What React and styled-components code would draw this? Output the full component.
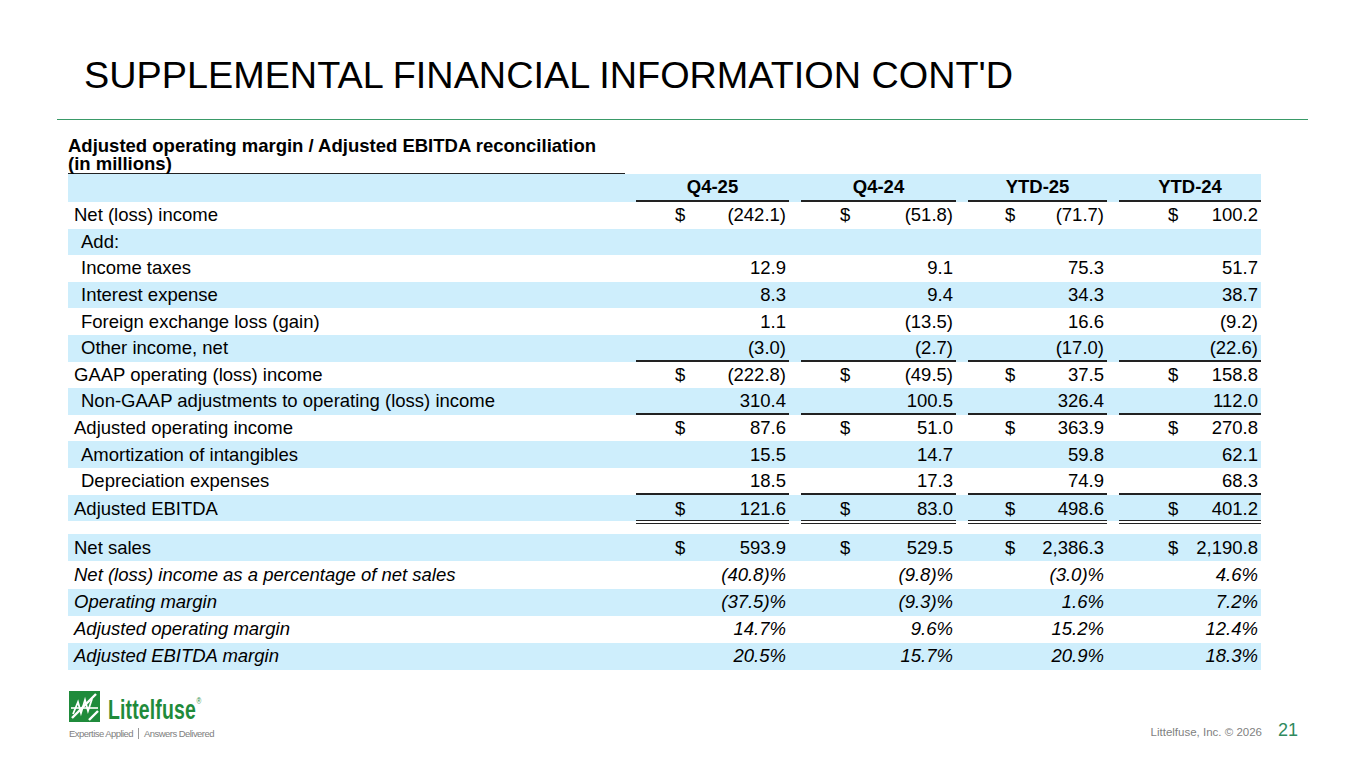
import React from "react";
import styled, { createGlobalStyle } from "styled-components";

const GlobalStyle = createGlobalStyle`
  html, body {
    margin: 0;
    padding: 0;
    background: #fff;
  }
  body {
    font-family: "Liberation Sans", Arial, sans-serif;
    color: #000;
  }
`;

const BLUE = "#ceeefc";
const GREEN = "#2f8a5e";
const COLS = "556px 153px 155px 139px 142px";
// where the "$" sits inside each value column
const DOLLAR_LEFT = [39, 39, 37, 49];

const Page = styled.div`
  width: 1365px;
  height: 768px;
  display: flex;
  flex-direction: column;
  overflow: hidden;
`;

const Title = styled.h1`
  margin: 56px 0 0 84px;
  font-size: 37.8px;
  line-height: 38px;
  font-weight: normal;
  color: #000;
`;

const Rule = styled.div`
  margin: 25px 0 0 57px;
  width: 1251px;
  height: 1px;
  background: #3a9a68;
`;

const Table = styled.div`
  margin: 17px 0 0 68px;
  width: 1193px;
  font-size: 18.5px;
`;

const Caption = styled.div`
  width: 557px;
  font-weight: bold;
  line-height: 18px;
  border-bottom: 1px solid #222;
`;

const Row = styled.div`
  display: grid;
  grid-template-columns: ${COLS};
  column-gap: 12px;
  height: ${(p) => p.$h || 26.6}px;
  background: ${(p) => (p.$blue ? BLUE : "transparent")};
  font-style: ${(p) => (p.$italic ? "italic" : "normal")};
`;

const Label = styled.div`
  display: flex;
  align-items: center;
  padding-left: ${(p) => (p.$indent ? 13 : 6)}px;
  white-space: nowrap;
`;

const HeadCell = styled.div`
  display: flex;
  align-items: center;
  justify-content: center;
  font-weight: bold;
  border-bottom: 2px solid #222;
  box-sizing: border-box;
`;

const Cell = styled.div`
  display: flex;
  align-items: center;
  box-sizing: border-box;
  padding: 0 3px 0 ${(p) => p.$dl}px;
  border-bottom: ${(p) =>
    p.$rule === "double"
      ? "4px double #222"
      : p.$rule === "single"
      ? "2px solid #222"
      : "none"};
  padding-top: ${(p) => (p.$rule === "double" ? 3 : p.$rule ? 1 : 0)}px;
`;

const Value = styled.span`
  margin-left: auto;
  white-space: nowrap;
`;

const Spacer = styled.div`
  height: 13px;
`;

const Footer = styled.div`
  margin-top: auto;
  display: flex;
  justify-content: space-between;
  align-items: flex-end;
  padding: 0 67px 29px 69px;
`;

const Logo = styled.div`
  display: flex;
  flex-direction: column;
`;

const LogoTop = styled.div`
  display: flex;
  align-items: center;
  height: 31px;
`;

const Wordmark = styled.span`
  display: inline-block;
  margin-left: 8px;
  font-size: 27px;
  font-weight: bold;
  color: #1f8b3b;
  transform: scaleX(0.72);
  transform-origin: left center;
  letter-spacing: 0.2px;
  line-height: 31px;
  position: relative;
  top: -1px;
`;

const Reg = styled.sup`
  font-size: 9px;
  font-weight: normal;
  vertical-align: 15px;
  margin-left: 1px;
`;

const Tagline = styled.div`
  margin-top: 6px;
  font-size: 9.5px;
  letter-spacing: -0.55px;
  color: #808080;
  white-space: nowrap;
`;

const Bar = styled.span`
  display: inline-block;
  width: 1px;
  height: 11px;
  background: #999;
  margin: 0 5px;
  vertical-align: -2px;
`;

const Credit = styled.div`
  display: flex;
  align-items: baseline;
  gap: 16px;
  margin-bottom: -2px;
`;

const Copy = styled.span`
  font-size: 11.5px;
  color: #7f7f7f;
`;

const PageNo = styled.span`
  font-size: 18px;
  color: ${GREEN};
`;

const rowsTop = [
  { label: "Net (loss) income", dollar: true, vals: ["(242.1)", "(51.8)", "(71.7)", "100.2"] },
  { label: "Add:", indent: true, blue: true },
  { label: "Income taxes", indent: true, vals: ["12.9", "9.1", "75.3", "51.7"] },
  { label: "Interest expense", indent: true, blue: true, vals: ["8.3", "9.4", "34.3", "38.7"] },
  { label: "Foreign exchange loss (gain)", indent: true, vals: ["1.1", "(13.5)", "16.6", "(9.2)"] },
  { label: "Other income, net", indent: true, blue: true, rule: "single", vals: ["(3.0)", "(2.7)", "(17.0)", "(22.6)"] },
  { label: "GAAP operating (loss) income", dollar: true, vals: ["(222.8)", "(49.5)", "37.5", "158.8"] },
  { label: "Non-GAAP adjustments to operating (loss) income", indent: true, blue: true, rule: "single", vals: ["310.4", "100.5", "326.4", "112.0"] },
  { label: "Adjusted operating income", dollar: true, vals: ["87.6", "51.0", "363.9", "270.8"] },
  { label: "Amortization of intangibles", indent: true, blue: true, vals: ["15.5", "14.7", "59.8", "62.1"] },
  { label: "Depreciation expenses", indent: true, rule: "single", vals: ["18.5", "17.3", "74.9", "68.3"] },
  { label: "Adjusted EBITDA", blue: true, dollar: true, rule: "double", vals: ["121.6", "83.0", "498.6", "401.2"] },
];

const rowsBottom = [
  { label: "Net sales", blue: true, dollar: true, vals: ["593.9", "529.5", "2,386.3", "2,190.8"] },
  { label: "Net (loss) income as a percentage of net sales", italic: true, vals: ["(40.8)%", "(9.8)%", "(3.0)%", "4.6%"] },
  { label: "Operating margin", italic: true, blue: true, vals: ["(37.5)%", "(9.3)%", "1.6%", "7.2%"] },
  { label: "Adjusted operating margin", italic: true, vals: ["14.7%", "9.6%", "15.2%", "12.4%"] },
  { label: "Adjusted EBITDA margin", italic: true, blue: true, vals: ["20.5%", "15.7%", "20.9%", "18.3%"] },
];

const DataRow = ({ row, h }) => (
  <Row $blue={row.blue} $italic={row.italic} $h={h}>
    <Label $indent={row.indent}>{row.label}</Label>
    {[0, 1, 2, 3].map((i) => (
      <Cell key={i} $dl={DOLLAR_LEFT[i]} $rule={row.rule}>
        {row.dollar && <span>$</span>}
        <Value>{row.vals ? row.vals[i] : ""}</Value>
      </Cell>
    ))}
  </Row>
);

const LogoMark = () => (
  <svg width="31" height="31" viewBox="0 0 31 31">
    <rect x="0" y="0" width="31" height="31" fill="#1f8b3b" />
    <path d="M3 27 L27 3" stroke="#fff" strokeWidth="2.4" />
    <path d="M2 17 L29 17" stroke="#fff" strokeWidth="1.6" />
    <polyline
      points="4,23 9,11 12,22 16,9 19,20 23,8"
      fill="none"
      stroke="#fff"
      strokeWidth="1.8"
      strokeLinejoin="miter"
    />
    <path d="M20 29 L29 20" stroke="#fff" strokeWidth="2.4" />
  </svg>
);

export default function App() {
  return (
    <>
      <GlobalStyle />
      <Page>
        <Title>SUPPLEMENTAL FINANCIAL INFORMATION CONT'D</Title>
        <Rule />
        <Table>
          <Caption>
            Adjusted operating margin / Adjusted EBITDA reconciliation
            <br />
            (in millions)
          </Caption>
          <Row $blue $h={28}>
            <div />
            <HeadCell>Q4-25</HeadCell>
            <HeadCell>Q4-24</HeadCell>
            <HeadCell>YTD-25</HeadCell>
            <HeadCell>YTD-24</HeadCell>
          </Row>
          {rowsTop.map((r) => (
            <DataRow key={r.label} row={r} />
          ))}
          <Spacer />
          {rowsBottom.map((r) => (
            <DataRow key={r.label} row={r} h={27.2} />
          ))}
        </Table>
        <Footer>
          <Logo>
            <LogoTop>
              <LogoMark />
              <Wordmark>
                Littelfuse<Reg>®</Reg>
              </Wordmark>
            </LogoTop>
            <Tagline>
              Expertise Applied<Bar />Answers Delivered
            </Tagline>
          </Logo>
          <Credit>
            <Copy>Littelfuse, Inc. © 2026</Copy>
            <PageNo>21</PageNo>
          </Credit>
        </Footer>
      </Page>
    </>
  );
}
